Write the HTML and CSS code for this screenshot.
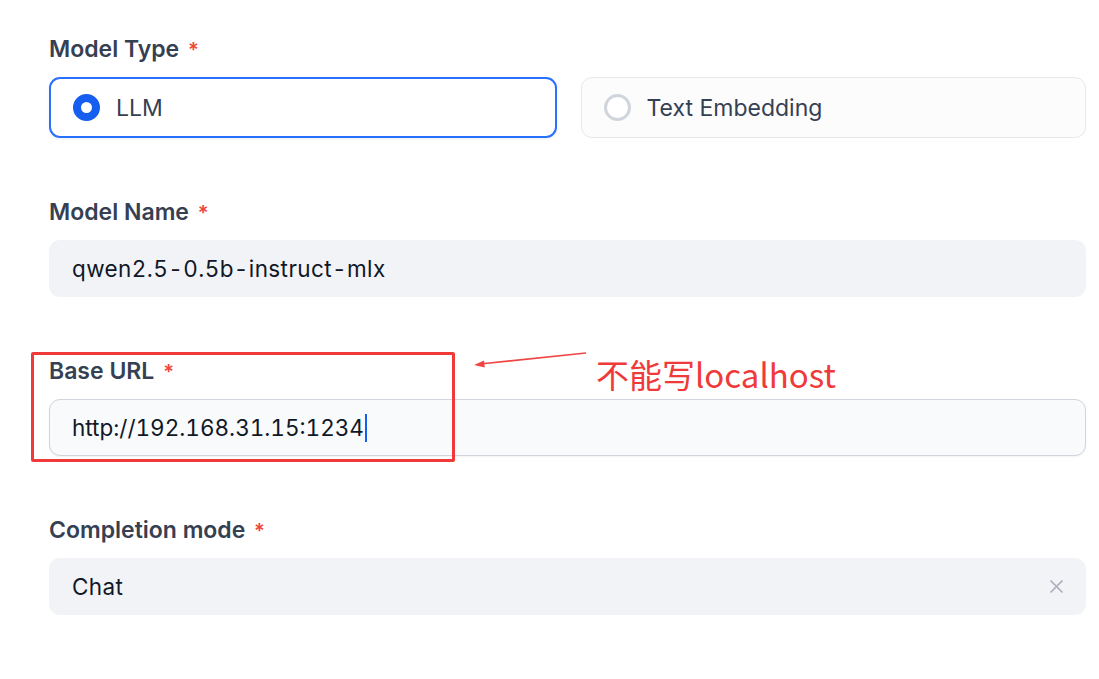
FILE: index.html
```html
<!DOCTYPE html>
<html lang="en">
<head>
  <meta charset="UTF-8">
  <title>Add Model</title>
  <meta name="viewport" content="width=device-width, initial-scale=1.0">
  <link rel="stylesheet" href="styles.css">
</head>
<body>
  <form class="model-form">
    <div class="field">
      <label class="field-label">Model Type <span class="req">*</span></label>
      <div class="radio-row">
        <div class="radio-card checked">
          <span class="radio-dot"></span>
          <span>LLM</span>
        </div>
        <div class="radio-card">
          <span class="radio-dot"></span>
          <span>Text Embedding</span>
        </div>
      </div>
    </div>

    <div class="field">
      <label class="field-label">Model Name <span class="req">*</span></label>
      <div class="input">qwen2.5-0.5b-instruct-mlx</div>
    </div>

    <div class="field">
      <label class="field-label">Base URL <span class="req">*</span></label>
      <div class="input focused">http://192.168.31.15:1234<span class="caret"></span></div>
    </div>

    <div class="field">
      <label class="field-label">Completion mode <span class="req">*</span></label>
      <div class="input select">
        <span>Chat</span>
        <svg class="clear" width="15" height="15" viewBox="0 0 15 15"><path d="M1.5 1.5L13.5 13.5M13.5 1.5L1.5 13.5" stroke="#a8adb7" stroke-width="1.6" fill="none"/></svg>
      </div>
    </div>

    <div class="field">
      <label class="field-label">Model context size <span class="req">*</span></label>
    </div>
  </form>

  <!-- screenshot annotation -->
  <div class="note-box"></div>
  <svg class="note-arrow" width="120" height="20" viewBox="0 0 120 20">
    <path d="M116 2 L10 13" stroke="#f04545" stroke-width="1.6" fill="none"/>
    <path d="M4 14 L14 9.5 L14.8 16.5 Z" fill="#f04545"/>
  </svg>
  <div class="note-text">不能写localhost</div>
</body>
</html>
```

FILE: styles.css
```css
body {
  margin: 0;
  background: #fff;
  font-family: Inter, 'Noto Sans', Arial, sans-serif;
  overflow: hidden;
  height: 679px;
  position: relative;
}
.model-form {
  padding: 34px 13px 0 49px;
  display: flex;
  flex-direction: column;
  gap: 59px;
}
.field {
  display: flex;
  flex-direction: column;
  gap: 12px;
}
.field-label {
  font-size: 23px;
  line-height: 30px;
  font-weight: 600;
  color: #354052;
}
.req {
  color: #f04438;
  font-size: 20px;
  margin-left: 3px;
}
.radio-row {
  display: flex;
  gap: 24px;
}
.radio-card {
  flex: 1;
  height: 61px;
  box-sizing: border-box;
  border: 1px solid #e6e8ec;
  background: #fcfcfd;
  border-radius: 11px;
  display: flex;
  align-items: center;
  gap: 16px;
  padding-left: 22px;
  font-size: 23px;
  color: #354052;
}
.radio-card.checked {
  border: 2px solid #2970ff;
  background: #fff;
  padding-left: 22px;
  box-shadow: 0 1px 3px rgba(16, 24, 40, 0.08);
}
.radio-dot {
  width: 27px;
  height: 27px;
  box-sizing: border-box;
  border-radius: 50%;
  border: 3px solid #d0d5dd;
  background: #fff;
}
.radio-card.checked .radio-dot {
  border: 8.5px solid #155eef;
}
.input {
  height: 57px;
  box-sizing: border-box;
  border-radius: 11px;
  background: #f2f3f6;
  display: flex;
  align-items: center;
  padding: 0 22px 0 23px;
  font-size: 22.5px;
  letter-spacing: 0.4px;
  font-feature-settings: "tnum";
  color: #101828;
}
.input.focused {
  background: #f9fafb;
  border: 1px solid #d0d5dd;
  padding-left: 22px;
  letter-spacing: 0;
  box-shadow: 0 1px 2px rgba(16, 24, 40, 0.05);
}
.caret {
  display: inline-block;
  width: 2px;
  height: 28px;
  background: #155eef;
  margin-left: 1px;
}
.select {
  justify-content: space-between;
}
.note-box {
  position: absolute;
  left: 31px;
  top: 352px;
  width: 418px;
  height: 104px;
  border: 3px solid #f03a3a;
  border-radius: 2px;
}
.note-arrow {
  position: absolute;
  left: 470px;
  top: 351px;
}
.note-text {
  position: absolute;
  left: 596px;
  top: 353px;
  font-family: 'Noto Sans CJK SC', 'Noto Sans', sans-serif;
  font-size: 33px;
  line-height: 42px;
  color: #f03a3a;
}
```
